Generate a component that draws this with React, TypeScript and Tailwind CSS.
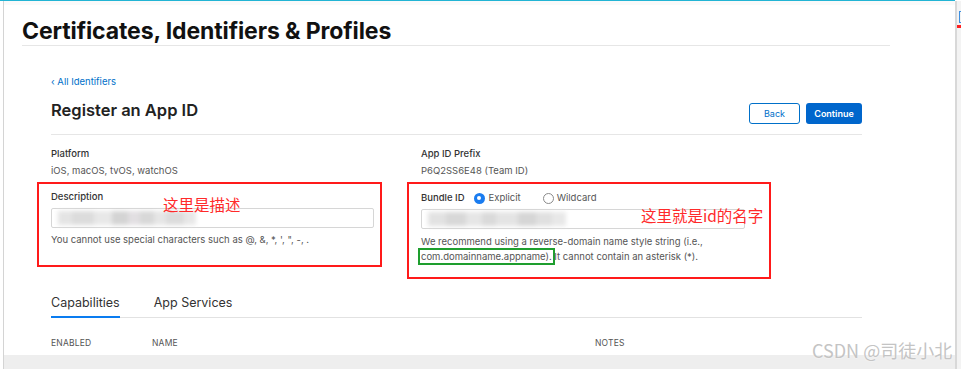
import React from 'react';

const Blur = ({ widths }: { widths: [number, string][] }) => (
  <div className="flex h-full items-center pl-[6px] blur-[2px]">
    {widths.map(([w, c], i) => (
      <div key={i} className="h-[14px]" style={{ width: w, background: c }} />
    ))}
  </div>
);

const App = () => {
  return (
    <div className="relative flex h-[369px] w-[961px] flex-col overflow-hidden bg-white font-['Inter',sans-serif] text-[#333]">
      <div className="mr-[6px] h-px bg-[#22b4d4]" />
      <div className="flex flex-1">
        <div className="w-[3px]" />
        <div className="w-px bg-[#d4d4d4]" />
        <main className="flex flex-1 flex-col">
          <div className="h-1 bg-[#fafafa]" />
          {/* header */}
          <div className="ml-[18px] w-[868px] border-b border-[#e6e6e6] pb-[1px] pt-[13px]">
            <h1 className="text-[23px] font-bold leading-[26px] tracking-[-0.1px] text-[#111]">
              Certificates, Identifiers &amp; Profiles
            </h1>
          </div>

          <div className="ml-[47px] w-[811px]">
            <a className="mt-[29px] block text-[9.5px] leading-[14px] text-[#0070c9]">‹ All Identifiers</a>

            <div className="mt-[10px] flex items-start justify-between border-b border-[#e6e6e6] pb-[10px]">
              <h2 className="text-[16.5px] font-semibold leading-[22px] text-[#222]">Register an App ID</h2>
              <div className="mt-[4px] flex gap-[6px]">
                <button className="h-[21px] w-[51px] rounded-[3px] border border-[#0070c9] text-[9px] text-[#0070c9]">Back</button>
                <button className="h-[21px] w-[56px] rounded-[3px] bg-[#0066cc] text-[9px] font-semibold text-white">Continue</button>
              </div>
            </div>

            <div className="mt-[12px] grid grid-cols-[370px_1fr]">
              {/* left column */}
              <div>
                <div className="text-[9.5px] font-medium leading-[14px] text-[#333]">Platform</div>
                <div className="mt-[3px] text-[9.5px] leading-[14px] text-[#555]">iOS, macOS, tvOS, watchOS</div>

                <div className="relative -ml-[14px] mt-[4px] w-[345px] border-2 border-[#ff1a1a] pb-[18px] pl-[12px] pt-[6px]">
                  <div className="text-[9.5px] font-medium leading-[14px] text-[#333]">Description</div>
                  <div className="mt-[4px] h-[20px] w-[323px] rounded-[2px] border border-[#d6d6d6]">
                    <Blur
                      widths={[
                        [14, '#e4e4e4'],
                        [22, '#dcdcdc'],
                        [18, '#e8e8e8'],
                        [16, '#d4d4d4'],
                        [12, '#e2dfe2'],
                        [14, '#d8d8d8'],
                        [12, '#e6e6e6'],
                        [18, '#dcdcdc'],
                        [12, '#e8e8e8'],
                      ]}
                    />
                  </div>
                  <div className="mt-[5px] text-[9.5px] leading-[14px] text-[#555]">
                    You cannot use special characters such as @, &amp;, *, ', ", -, .
                  </div>
                  <span className="absolute left-[124px] top-[10px] font-['Noto_Sans_CJK_SC',sans-serif] text-[15.5px] leading-[20px] text-[#ff2a2a]">
                    这里是描述
                  </span>
                </div>
              </div>

              {/* right column */}
              <div>
                <div className="text-[9.5px] font-medium leading-[14px] text-[#333]">App ID Prefix</div>
                <div className="mt-[3px] text-[9.5px] leading-[14px] text-[#555]">P6Q2SS6E48 (Team ID)</div>

                <div className="relative -ml-[14px] mt-[4px] w-[364px] border-2 border-[#ff1a1a] pb-[13px] pl-[12px] pt-[7px]">
                  <div className="flex items-center text-[9.5px] leading-[14px]">
                    <span className="font-medium text-[#333]">Bundle ID</span>
                    <span className="ml-[9px] flex h-[11px] w-[11px] items-center justify-center rounded-full bg-[#1a7cf0]">
                      <span className="h-[4px] w-[4px] rounded-full bg-white" />
                    </span>
                    <span className="ml-[4px] text-[#555]">Explicit</span>
                    <span className="ml-[22px] h-[11px] w-[11px] rounded-full border border-[#8a8a8a]" />
                    <span className="ml-[3px] text-[#555]">Wildcard</span>
                  </div>
                  <div className="mt-[4px] h-[20px] w-[324px] rounded-[2px] border border-[#d6d6d6]">
                    <Blur
                      widths={[
                        [18, '#e2e2e2'],
                        [20, '#d8d8d8'],
                        [16, '#e6e6e6'],
                        [14, '#dadada'],
                        [22, '#e4e4e4'],
                        [18, '#d6d6d6'],
                        [16, '#e0e0e0'],
                        [14, '#e8e8e8'],
                      ]}
                    />
                  </div>
                  <div className="mt-[5px] text-[9.5px] leading-[15px] text-[#555]">
                    We recommend using a reverse-domain name style string (i.e.,
                    <br />
                    <span className="-ml-[3px] -mr-[3px] border-2 border-[#1e9e2e] px-px py-[1px]">com.domainname.appname).</span>{' '}
                    It cannot contain an asterisk (*).
                  </div>
                  <span className="absolute left-[232px] top-[21px] font-['Noto_Sans_CJK_SC',sans-serif] text-[15.5px] leading-[20px] text-[#ff2a2a]">
                    这里就是id的名字
                  </span>
                </div>
              </div>
            </div>

            {/* tabs */}
            <div className="mt-[15px] flex gap-[34px] border-b border-[#e2e2e2] text-[12.5px] leading-[18px]">
              <div className="-mb-px border-b-2 border-[#0a7cf0] pb-[4px] text-[#333]">Capabilities</div>
              <div className="pb-[4px] text-[#333]">App Services</div>
            </div>

            <div className="mt-[19px] flex text-[8.5px] leading-[12px] tracking-[0.2px] text-[#555]">
              <div className="w-[101px]">ENABLED</div>
              <div className="w-[443px]">NAME</div>
              <div>NOTES</div>
            </div>
          </div>

          <div className="mt-[6px] flex-1 bg-[#eeeeee]" />
        </main>
        <div className="relative w-[6px] border-l-2 border-[#d8d8d8] bg-[#f3f3f3]">
          <div className="absolute left-[2px] top-[10px] h-[12px] w-[4px] border border-[#3d8fe0]" />
          <div className="absolute left-0 top-[24px] h-[3px] w-[4px] bg-[#ff2020]" />
        </div>
      </div>

      <div className="absolute left-[812px] top-[339px] font-['Noto_Sans_CJK_SC',sans-serif] text-[18px] leading-[22px] text-[#c4c4c4] [text-shadow:0_0_2px_#fff]">
        CSDN @司徒小北
      </div>
    </div>
  );
};

export default App;
